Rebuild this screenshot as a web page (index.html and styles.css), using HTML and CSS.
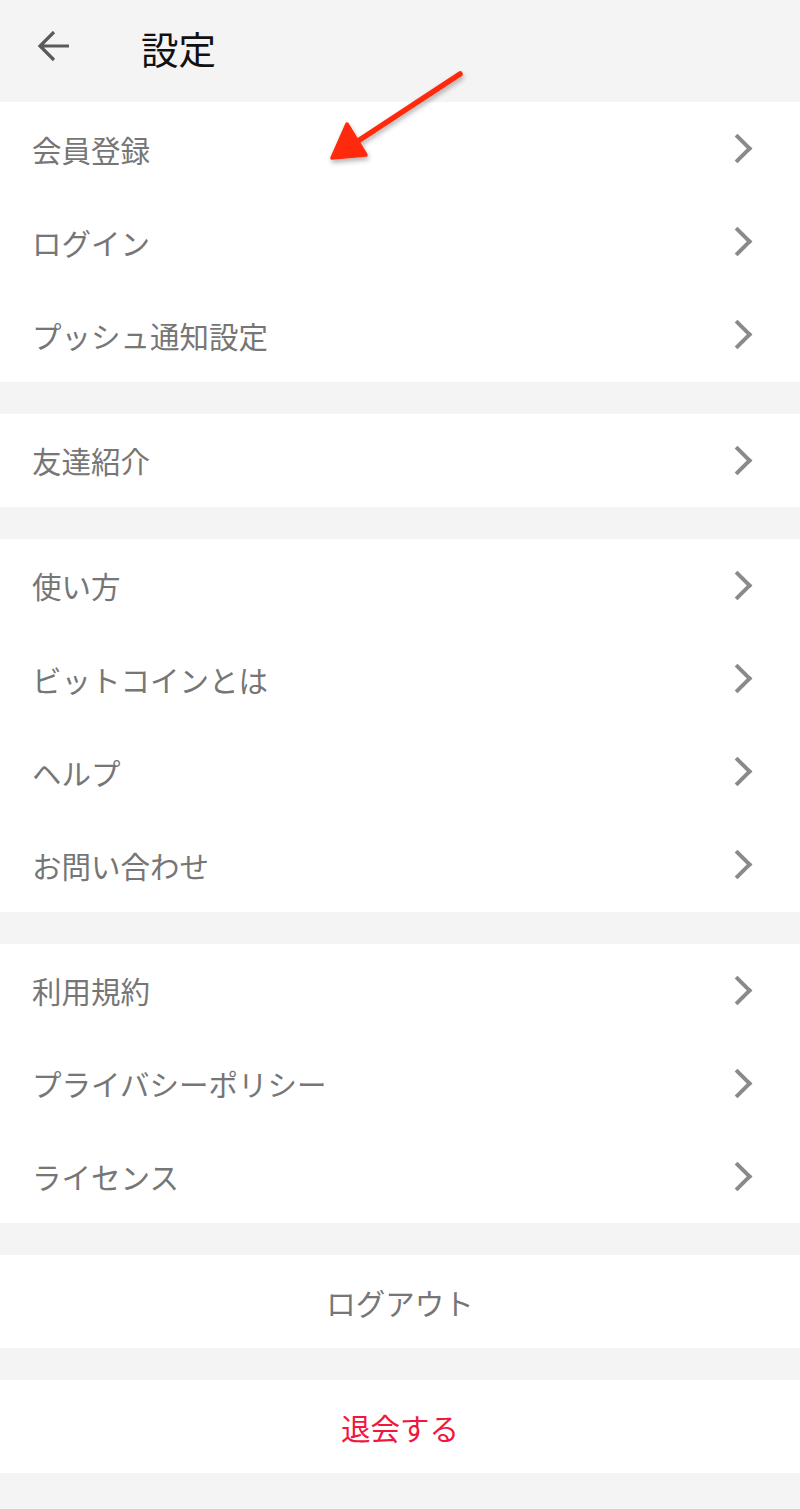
FILE: index.html
```html
<!DOCTYPE html>
<html lang="ja">
<head>
    <meta charset="UTF-8">
    <meta name="viewport" content="width=device-width, initial-scale=1.0">
    <title>設定</title>
    <link rel="stylesheet" href="styles.css">
</head>
<body>
    <header class="topbar">
        <svg class="back" width="34" height="34" viewBox="0 0 34 34">
            <path d="M32 15 H4 M17 1 L3 15 L17 29" fill="none" stroke="#5a5a5a" stroke-width="3.2"/>
        </svg>
        <h1>設定</h1>
    </header>

    <!-- annotation arrow -->
    <svg class="pointer" width="160" height="120" viewBox="0 0 160 120">
        <defs>
            <filter id="shade" x="-20%" y="-20%" width="140%" height="140%">
                <feDropShadow dx="1" dy="3" stdDeviation="2.5" flood-color="#000" flood-opacity="0.3"/>
            </filter>
        </defs>
        <g filter="url(#shade)" fill="#ff2a10" stroke="#ff2a10" stroke-linejoin="round" stroke-linecap="round">
            <path d="M142 14 L40 81" stroke-width="5.5" fill="none"/>
            <path d="M14 98 L29 64 L48 95 Z" stroke-width="3.5"/>
        </g>
    </svg>

    <section class="group">
        <div class="row">会員登録<span class="chev"></span></div>
        <div class="row">ログイン<span class="chev"></span></div>
        <div class="row">プッシュ通知設定<span class="chev"></span></div>
    </section>

    <section class="group">
        <div class="row">友達紹介<span class="chev"></span></div>
    </section>

    <section class="group">
        <div class="row">使い方<span class="chev"></span></div>
        <div class="row">ビットコインとは<span class="chev"></span></div>
        <div class="row">ヘルプ<span class="chev"></span></div>
        <div class="row">お問い合わせ<span class="chev"></span></div>
    </section>

    <section class="group">
        <div class="row">利用規約<span class="chev"></span></div>
        <div class="row">プライバシーポリシー<span class="chev"></span></div>
        <div class="row">ライセンス<span class="chev"></span></div>
    </section>

    <section class="group">
        <div class="row center">ログアウト</div>
    </section>

    <section class="group">
        <div class="row center danger">退会する</div>
    </section>
</body>
</html>
```

FILE: styles.css
```css
/* general */
body {
    background-color: #f4f4f4;
    margin: 0;
    padding: 0 0 40px;
    font-family: "Noto Sans CJK JP", "Noto Sans", sans-serif;
    position: relative;
}

.topbar {
    height: 102px;
    display: flex;
    align-items: center;
    padding-left: 37px;
    box-sizing: border-box;
}

.back {
    margin-top: -6px;
}

.topbar h1 {
    margin: 0 0 0 70px;
    font-size: 37.5px;
    font-weight: 400;
    color: #111;
    line-height: 1;
    padding-bottom: 6px;
}

/* arrow drawn over the list */
.pointer {
    position: absolute;
    left: 318px;
    top: 60px;
}

.group {
    background-color: #fff;
    margin-bottom: 32px;
}

.row {
    height: 93.2px;
    display: flex;
    align-items: center;
    justify-content: space-between;
    padding: 0 48px 0 32px;
    font-size: 29.5px;
    color: #767676;
}

.row.center {
    justify-content: center;
    padding: 0;
}

.danger {
    color: #f2163f;
}

/* chevron */
.chev {
    width: 17px;
    height: 17px;
    border-top: 4px solid #8a8a8a;
    border-right: 4px solid #8a8a8a;
    transform: rotate(45deg);
    margin-right: 4px;
}
```
